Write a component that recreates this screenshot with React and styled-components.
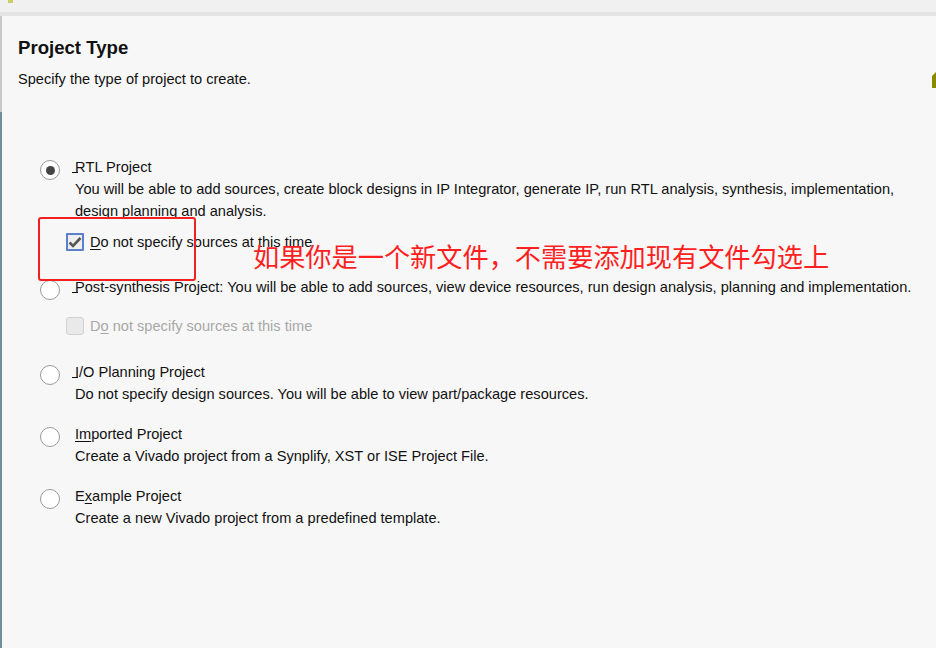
import styled, { createGlobalStyle } from 'styled-components';

const GlobalStyle = createGlobalStyle`
  html, body {
    margin: 0;
    padding: 0;
    background: #f7f7f7;
  }
  body {
    font-family: "Liberation Sans", Arial, sans-serif;
    color: #111;
  }
`;

const Page = styled.div`
  width: 936px;
  height: 648px;
  display: flex;
  flex-direction: column;
  overflow: hidden;
  position: relative;
`;

const TopStrip = styled.div`
  height: 12px;
  background: #f0f0f0;
  position: relative;
  &::before {
    content: '';
    position: absolute;
    left: 8px;
    top: 0;
    width: 5px;
    height: 3px;
    background: #c8cf6a;
  }
`;

const Divider = styled.div`
  height: 4px;
  background: #e3e3e3;
`;

const Body = styled.div`
  flex: 1;
  display: flex;
  background: #f7f7f7;
  position: relative;
`;

const EdgeLine = styled.div`
  width: 2px;
  background: linear-gradient(#c9c9c9 0, #c9c9c9 96px, #6f8f98 96px);
`;

const Content = styled.main`
  flex: 1;
  padding: 21px 0 0 16px;
`;

const Title = styled.h1`
  margin: 0;
  font-size: 18.6px;
  font-weight: bold;
  line-height: 22px;
  color: #111;
`;

const Subtitle = styled.p`
  margin: 9px 0 0;
  font-size: 14.6px;
  line-height: 22px;
`;

const Options = styled.div`
  margin-top: 66px;
  padding-left: 22px;
  display: flex;
  flex-direction: column;
`;

const Option = styled.div`
  display: grid;
  grid-template-columns: 20px 1fr;
  column-gap: 15px;
  margin-top: ${(p) => p.$gap || 0}px;
`;

const Radio = styled.span`
  width: 20px;
  height: 20px;
  box-sizing: border-box;
  border-radius: 50%;
  border: 1.5px solid #9a9a9a;
  background: #fff;
  margin-top: 4px;
  display: flex;
  align-items: center;
  justify-content: center;
  &::after {
    content: '';
    display: ${(p) => (p.$checked ? 'block' : 'none')};
    width: 9px;
    height: 9px;
    border-radius: 50%;
    background: #444;
  }
`;

const Text = styled.div`
  font-size: 14.6px;
  line-height: 22px;
`;

const Mn = styled.span`
  text-decoration: underline;
  text-underline-offset: 2px;
`;

/* mnemonic underline drawn a little to the left of the letter */
const ShiftMn = styled.span`
  position: relative;
  &::after {
    content: '';
    position: absolute;
    left: -3px;
    bottom: 2px;
    width: 6px;
    height: 1px;
    background: currentColor;
  }
`;

const CheckRow = styled.div`
  display: flex;
  align-items: center;
  gap: 6px;
  margin-left: 26px;
  margin-top: ${(p) => p.$gap}px;
  font-size: 14.6px;
  line-height: 22px;
  color: ${(p) => (p.$disabled ? '#a8a8a8' : '#111')};
`;

const Box = styled.span`
  width: 18px;
  height: 18px;
  box-sizing: border-box;
  border-radius: ${(p) => (p.$disabled ? '3px' : '1px')};
  border: ${(p) => (p.$disabled ? '1.5px solid #d2d2d2' : '2px solid #5b7fcf')};
  background: ${(p) => (p.$disabled ? '#e9e9e9' : '#eeeeee')};
  display: flex;
  align-items: center;
  justify-content: center;
`;

const RedFrame = styled.div`
  position: absolute;
  left: 38px;
  top: 201px;
  width: 158px;
  height: 64px;
  box-sizing: border-box;
  border: 2px solid #f42020;
  border-radius: 3px;
`;

const Note = styled.div`
  position: absolute;
  left: 253px;
  top: 223px;
  font-family: "Noto Sans CJK SC", "Liberation Sans", sans-serif;
  font-size: 26.2px;
  line-height: 34px;
  color: #ff1f1f;
  white-space: nowrap;
`;

const Marker = styled.div`
  position: absolute;
  right: 0;
  top: 56px;
  width: 4px;
  height: 16px;
  background: #8a8a00;
  clip-path: polygon(100% 0, 100% 100%, 0 100%, 0 25%);
`;

const Check = () => (
  <svg width="14" height="12" viewBox="0 0 14 12">
    <path d="M1.5 6.5 L5 10 L12.5 2" fill="none" stroke="#555" strokeWidth="2.6" />
  </svg>
);

export default function App() {
  return (
    <Page>
      <GlobalStyle />
      <TopStrip />
      <Divider />
      <Body>
        <EdgeLine />
        <Content>
          <Title>Project Type</Title>
          <Subtitle>Specify the type of project to create.</Subtitle>
          <Options>
            <Option>
              <Radio $checked />
              <Text>
                <ShiftMn>R</ShiftMn>TL Project
                <br />
                You will be able to add sources, create block designs in IP Integrator, generate IP, run RTL analysis, synthesis, implementation,
                <br />
                design planning and analysis.
              </Text>
            </Option>
            <CheckRow $gap={9}>
              <Box>
                <Check />
              </Box>
              <span>
                <Mn>D</Mn>o not specify sources at this time
              </span>
            </CheckRow>
            <Option $gap={23}>
              <Radio />
              <Text>
                <ShiftMn>P</ShiftMn>ost-synthesis Project: You will be able to add sources, view device resources, run design analysis, planning and implementation.
              </Text>
            </Option>
            <CheckRow $gap={15} $disabled>
              <Box $disabled />
              <span>
                D<Mn>o</Mn> not specify sources at this time
              </span>
            </CheckRow>
            <Option $gap={24}>
              <Radio />
              <Text>
                <ShiftMn>I</ShiftMn>/O Planning Project
                <br />
                Do not specify design sources. You will be able to view part/package resources.
              </Text>
            </Option>
            <Option $gap={18}>
              <Radio />
              <Text>
                <Mn>Im</Mn>ported Project
                <br />
                Create a Vivado project from a Synplify, XST or ISE Project File.
              </Text>
            </Option>
            <Option $gap={18}>
              <Radio />
              <Text>
                E<Mn>x</Mn>ample Project
                <br />
                Create a new Vivado project from a predefined template.
              </Text>
            </Option>
          </Options>
        </Content>
        <RedFrame />
        <Note>如果你是一个新文件，不需要添加现有文件勾选上</Note>
        <Marker />
      </Body>
    </Page>
  );
}
